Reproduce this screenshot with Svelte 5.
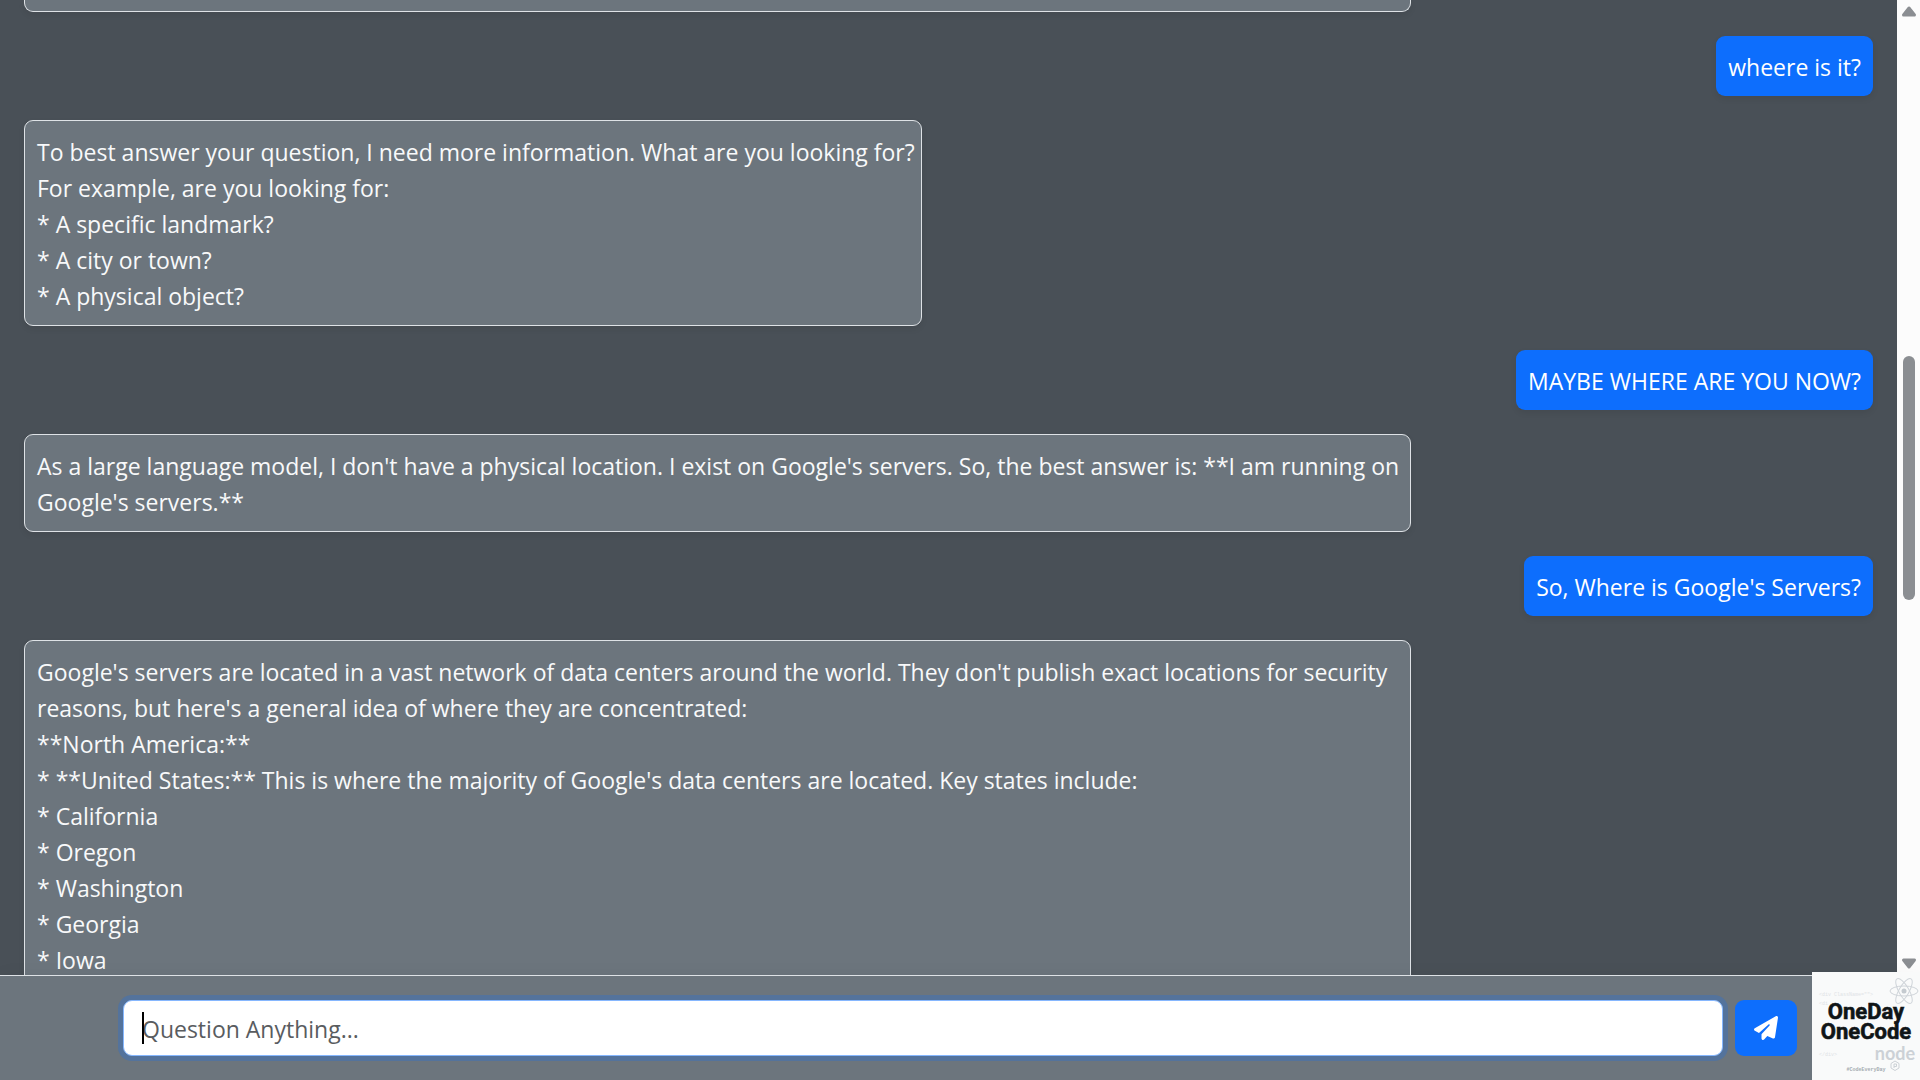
<script lang="ts">
  interface Message {
    role: 'user' | 'bot';
    text: string;
  }

  const messages: Message[] = [
    { role: 'user', text: 'wheere is it?' },
    {
      role: 'bot',
      text: `To best answer your question, I need more information. What are you looking for?
For example, are you looking for:
* A specific landmark?
* A city or town?
* A physical object?`,
    },
    { role: 'user', text: 'MAYBE WHERE ARE YOU NOW?' },
    {
      role: 'bot',
      text: `As a large language model, I don't have a physical location. I exist on Google's servers. So, the best answer is: **I am running on Google's servers.**`,
    },
    { role: 'user', text: "So, Where is Google's Servers?" },
    {
      role: 'bot',
      text: `Google's servers are located in a vast network of data centers around the world. They don't publish exact locations for security reasons, but here's a general idea of where they are concentrated:
**North America:**
* **United States:** This is where the majority of Google's data centers are located. Key states include:
* California
* Oregon
* Washington
* Georgia
* Iowa`,
    },
  ];

  const scroll = { top: 36, size: 26 };

  let question = $state('');

  function send(event: SubmitEvent) {
    event.preventDefault();
    question = '';
  }
</script>

<div class="app">
  <main class="chat">
    <div class="messages">
      <div class="bubble bot previous"></div>
      {#each messages as message}
        <div class="bubble {message.role}">{message.text}</div>
      {/each}
    </div>
    <div class="scrollbar" aria-hidden="true">
      <svg class="arrow" viewBox="0 0 16 12">
        <path d="M8 3 L13.5 10 H2.5 Z" />
      </svg>
      <div class="track">
        <div class="thumb" style="top: {scroll.top}%; height: {scroll.size}%"></div>
      </div>
      <svg class="arrow" viewBox="0 0 16 12">
        <path d="M8 9 L13.5 2 H2.5 Z" />
      </svg>
    </div>
  </main>

  <footer class="footer">
    <form class="ask" onsubmit={send}>
      <div class="field">
        <input
          type="text"
          placeholder="Question Anything..."
          aria-label="Question"
          bind:value={question}
        />
        {#if !question}<span class="caret"></span>{/if}
      </div>
      <button type="submit" aria-label="Send">
        <svg viewBox="0 0 512 512">
          <path
            d="M498.100 5.600c10.100 7 15.400 19.100 13.500 31.200l-64 416c-1.500 9.700-7.400 18.200-16 23s-18.900 5.400-28 1.600L284 427.700l-68.500 74.100c-8.900 9.700-22.900 12.900-35.200 8.100S160 493.200 160 480V396.400c0-4 1.500-7.800 4.200-10.700L331.800 202.800c5.800-6.300 5.600-16-.4-22s-15.700-6.400-22-.7L106 360.800 17.700 316.600C7.100 311.300.3 300.700 0 288.900s5.900-22.800 16.100-28.700l448-256c10.700-6.100 23.900-5.500 34 1.400z"
          />
        </svg>
      </button>
    </form>

    <svg class="logo" viewBox="0 0 108 108" role="img" aria-label="OneDay OneCode">
      <rect width="108" height="108" fill="#f9fafa" />
      <g class="code">
        <text x="7" y="24">&lt;div ClassName=""&gt;</text>
        <text x="7" y="33">&lt;di</text>
        <text x="7" y="84">&lt;/div&gt;</text>
      </g>
      <g class="atom">
        <ellipse cx="92" cy="19" rx="14" ry="5" />
        <ellipse cx="92" cy="19" rx="14" ry="5" transform="rotate(60 92 19)" />
        <ellipse cx="92" cy="19" rx="14" ry="5" transform="rotate(120 92 19)" />
        <circle cx="92" cy="19" r="2.500" />
      </g>
      <text class="name" x="54" y="47">OneDay</text>
      <text class="name" x="54" y="67">OneCode</text>
      <text class="node" x="83" y="88">node</text>
      <path class="hex" d="M83 89 L87 91.500 V96 L83 98.500 L79 96 V91.500 Z M82 96 V92 H84.500 V94.500 H82" />
      <text class="tag" x="54" y="99">#CodeEveryDay</text>
    </svg>
  </footer>
</div>

<style>
  :global(body) {
    margin: 0;
  }
  .app {
    display: flex;
    flex-direction: column;
    height: 100vh;
    background: #495057;
    font-family: 'Segoe UI', 'Open Sans', 'Noto Sans', sans-serif;
    font-size: 23px;
    line-height: 36px;
  }
  .chat {
    display: flex;
    flex: 1;
    min-height: 0;
  }
  .messages {
    display: flex;
    flex: 1;
    flex-direction: column;
    align-items: flex-start;
    gap: 24px;
    padding: 0 24px;
    overflow: hidden;
  }
  .bubble {
    box-sizing: border-box;
    flex-shrink: 0;
    max-width: 75%;
    padding: 13px 12px 11px;
    border-radius: 9px;
    box-shadow: 0 3px 6px rgba(0, 0, 0, 0.075);
    white-space: pre-wrap;
  }
  .bot {
    padding-right: 6px;
    border: 1px solid #dee2e6;
    background: #6c757d;
    color: #f8f9fa;
  }
  .user {
    align-self: flex-end;
    background: #0d6efd;
    color: #fff;
  }
  /* tail of the answer that is scrolled out at the top */
  .previous {
    width: 75%;
    height: 12px;
    padding: 0;
    border-top: none;
    border-radius: 0 0 9px 9px;
  }
  .scrollbar {
    display: flex;
    flex-direction: column;
    align-items: center;
    box-sizing: border-box;
    width: 23px;
    padding: 5px 0;
    background: #fcfcfc;
  }
  .arrow {
    width: 16px;
    height: 12px;
    fill: #8b8e92;
    stroke: #8b8e92;
    stroke-width: 3;
    stroke-linejoin: round;
  }
  .track {
    position: relative;
    flex: 1;
    width: 12px;
  }
  .thumb {
    position: absolute;
    width: 100%;
    border-radius: 6px;
    background: #8b8e92;
  }
  .footer {
    position: relative;
    padding: 24px 123px;
    border-top: 1px solid #dee2e6;
    background: #6c757d;
    box-shadow: 0 12px 24px rgba(0, 0, 0, 0.15);
  }
  .ask {
    display: flex;
    gap: 12px;
  }
  .field {
    position: relative;
    flex: 1;
  }
  input {
    display: block;
    box-sizing: border-box;
    width: 100%;
    height: 56px;
    padding: 2px 18px 0;
    border: 1px solid #86b7fe;
    border-radius: 9px;
    outline: none;
    background: #fff;
    box-shadow: 0 0 0 5px rgba(13, 110, 253, 0.25);
    color: #212529;
    font: inherit;
  }
  input::placeholder {
    color: #595c5f;
    opacity: 1;
  }
  .caret {
    position: absolute;
    top: 12px;
    left: 19px;
    width: 2px;
    height: 32px;
    background: #000;
  }
  button {
    display: flex;
    align-items: center;
    justify-content: center;
    width: 62px;
    height: 56px;
    padding: 0;
    border: none;
    border-radius: 9px;
    background: #0d6efd;
    cursor: pointer;
  }
  button svg {
    width: 24px;
    height: 24px;
    fill: #fff;
  }
  .logo {
    position: absolute;
    right: 0;
    bottom: 0;
    width: 108px;
    height: 108px;
  }
  .logo .name {
    fill: #101517;
    stroke: #101517;
    stroke-width: 0.6;
    font-family: Roboto, sans-serif;
    font-size: 22px;
    font-weight: 700;
    text-anchor: middle;
  }
  .logo .code text {
    fill: #dfe3e6;
    font-family: 'Liberation Mono', monospace;
    font-size: 5px;
  }
  .logo .atom ellipse {
    fill: none;
    stroke: #cfd4d9;
  }
  .logo .atom circle {
    fill: #c4cacf;
  }
  .logo .node {
    fill: #ccd1d6;
    font-family: Lato, sans-serif;
    font-size: 18px;
    font-weight: 700;
    text-anchor: middle;
  }
  .logo .hex {
    fill: none;
    stroke: #ccd1d6;
  }
  .logo .tag {
    fill: #a4abb1;
    font-family: 'Liberation Mono', monospace;
    font-size: 5px;
    font-weight: 700;
    text-anchor: middle;
  }
</style>
